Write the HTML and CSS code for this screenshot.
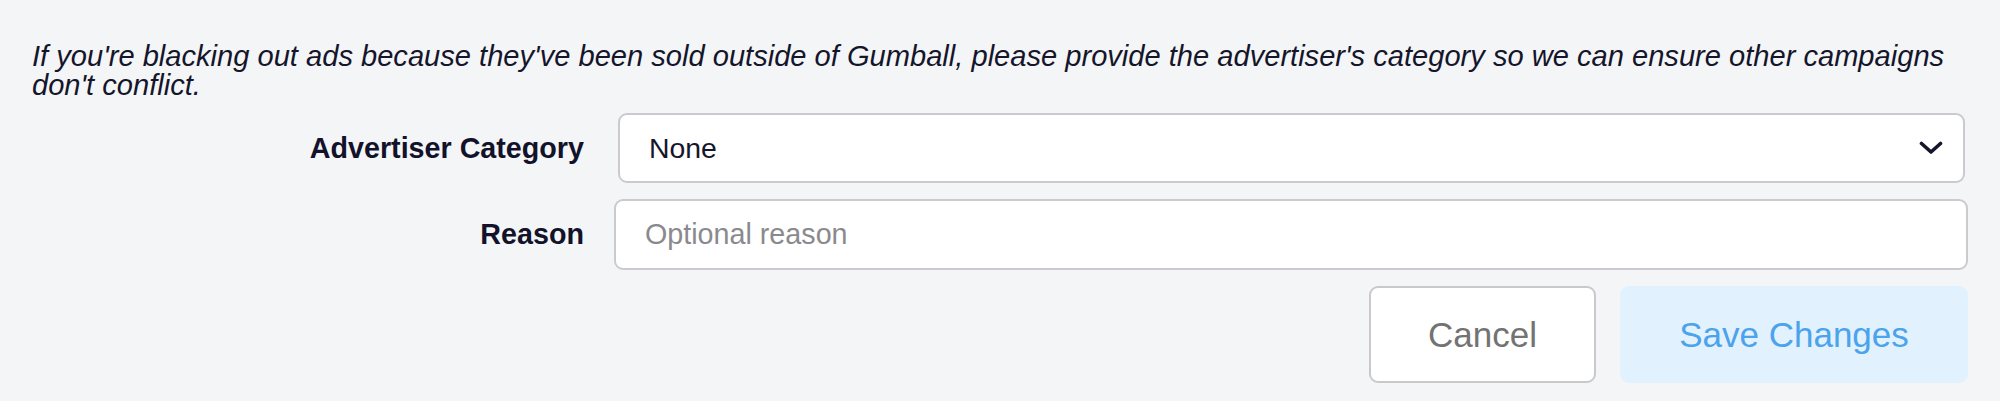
FILE: index.html
```html
<!DOCTYPE html>
<html lang="en">
<head>
<meta charset="utf-8">
<title>Blackout</title>
<link rel="stylesheet" href="styles.css">
</head>
<body>
<div class="panel">
  <p class="note">If you're blacking out ads because they've been sold outside of Gumball, please provide the advertiser's category so we can ensure other campaigns don't conflict.</p>
  <div class="row row-select">
    <label class="label">Advertiser Category</label>
    <div class="select">
      <span class="select-value">None</span>
      <svg class="chevron" width="24" height="14" viewBox="0 0 24 14"><path d="M2.5 2.5 L12 11 L21.5 2.5" fill="none" stroke="#15152b" stroke-width="3.6" stroke-linecap="round" stroke-linejoin="round"/></svg>
    </div>
  </div>
  <div class="row row-input">
    <label class="label">Reason</label>
    <input class="input" type="text" placeholder="Optional reason">
  </div>
  <div class="actions">
    <button class="btn btn-cancel">Cancel</button>
    <button class="btn btn-save">Save Changes</button>
  </div>
</div>
</body>
</html>
```
FILE: styles.css
```css
html, body {
  margin: 0;
  background: #f4f5f7;
  font-family: "Liberation Sans", Arial, Helvetica, sans-serif;
  color: #15152b;
}
.panel {
  padding: 42px 32px 0 32px;
}
.note {
  margin: 0 -30px 0 0;
  font-style: italic;
  font-size: 29.1px;
  line-height: 29px;
  color: #15152b;
}
.row {
  display: grid;
  grid-template-columns: 552px 1fr;
  column-gap: 30px;
  align-items: center;
}
.row-select {
  margin-top: 13px;
}
.row-input {
  margin-top: 16px;
}
.label {
  text-align: right;
  font-weight: bold;
  font-size: 28.7px;
  color: #12122a;
}
.select {
  margin: 0 3px 0 4px;
  height: 70px;
  box-sizing: border-box;
  background: #fff;
  border: 2px solid #cbcbcf;
  border-radius: 9px;
  display: flex;
  align-items: center;
  justify-content: space-between;
  padding: 0 20px 0 29px;
}
.select-value {
  font-size: 28.4px;
  color: #15152b;
}
.input {
  height: 71px;
  box-sizing: border-box;
  background: #fff;
  border: 2px solid #cbcbcf;
  border-radius: 9px;
  padding: 0 29px;
  font-family: inherit;
  font-size: 28.7px;
  color: #15152b;
  outline: none;
  width: 100%;
}
.input::placeholder {
  color: #8a8a8e;
}
.actions {
  margin-top: 16px;
  display: flex;
  justify-content: flex-end;
  gap: 24px;
}
.btn {
  height: 97px;
  box-sizing: border-box;
  border-radius: 9px;
  font-family: inherit;
  font-size: 35px;
}
.btn-cancel {
  width: 227px;
  background: #fff;
  border: 2px solid #c9c9cc;
  color: #737373;
}
.btn-save {
  width: 348px;
  background: #e1f1fd;
  border: none;
  color: #4aa3eb;
}
```
